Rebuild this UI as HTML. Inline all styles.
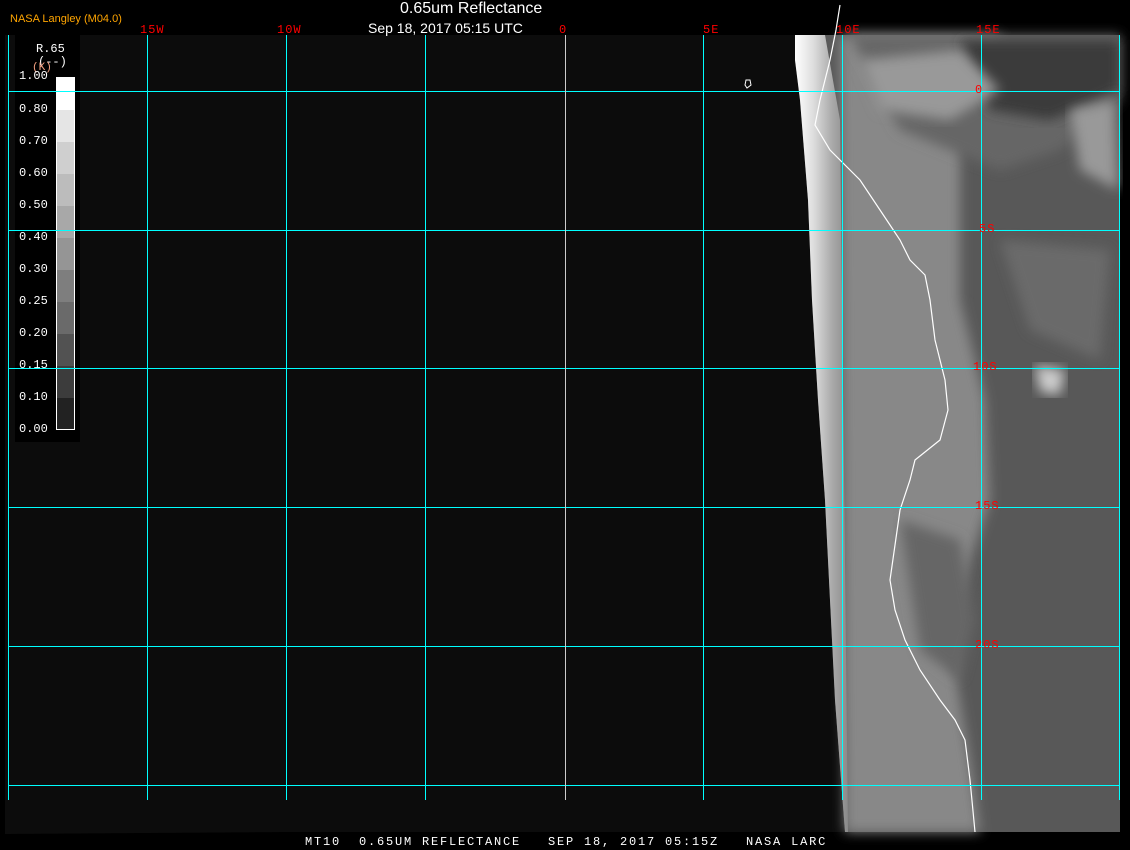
<!DOCTYPE html><html><head><style>
body{margin:0;background:#000;width:1130px;height:850px;overflow:hidden;position:relative;font-family:"Liberation Mono",monospace}
.t{position:absolute;color:#fff;font-family:"Liberation Sans",sans-serif;font-size:14px;white-space:nowrap}
.r{position:absolute;color:#f00;font-size:12px;font-family:"Liberation Mono",monospace;letter-spacing:1px}
.l{position:absolute;color:#fff;font-size:12px;left:19px;font-family:"Liberation Mono",monospace}
</style></head><body>
<svg width="1130" height="850" style="position:absolute;left:0;top:0">
<defs>
<linearGradient id="edge" x1="0" x2="1" y1="0" y2="0">
<stop offset="0" stop-color="#fff"/><stop offset="0.35" stop-color="#ddd"/><stop offset="0.7" stop-color="#aaa"/><stop offset="1" stop-color="#8a8a8a"/></linearGradient>
<filter id="bl"><feGaussianBlur stdDeviation="6"/></filter>
</defs>
<polygon points="5,35 1120,35 1120,832 290,832 5,834" fill="#0c0c0c"/>
<polygon points="795,35 1120,35 1120,832 845,832 835,700 830,600 825,500 818,400 812,300 808,200 800,100 795,60" fill="#585858"/>
<polygon points="840,35 1000,35 1000,80 960,150 960,300 985,400 990,500 970,560 950,640 970,760 980,832 845,832" fill="#888" filter="url(#bl)"/>
<polygon points="850,35 1120,35 1120,100 1060,150 1000,170 900,130" fill="#666" filter="url(#bl)"/>
<polygon points="960,40 1120,40 1120,90 1050,120 990,110" fill="#3a3a3a" filter="url(#bl)"/>
<polygon points="860,60 960,50 1000,90 950,120 880,110" fill="#999" filter="url(#bl)"/>
<polygon points="1070,110 1115,100 1118,190 1080,170" fill="#999" filter="url(#bl)"/>
<polygon points="1000,240 1110,250 1100,360 1030,330" fill="#6a6a6a" filter="url(#bl)"/>
<polygon points="1035,365 1065,370 1060,395 1040,392" fill="#ccc" filter="url(#bl)"/>
<polygon points="900,520 960,540 975,620 960,680 920,650" fill="#666" filter="url(#bl)"/>
<polygon points="795,35 825,35 840,120 848,832 845,832 835,700 830,600 825,500 818,400 812,300 808,200 800,100 795,60" fill="url(#edge)"/>
<polyline points="840,5 836,30 830,60 820,100 815,125 830,150 860,180 880,210 900,240 910,260 925,275 930,300 935,340 945,380 948,410 940,440 915,460 910,480 900,510 895,545 890,580 895,610 905,640 920,670 940,700 955,720 965,740 970,780 975,832" fill="none" stroke="#fff" stroke-width="1.2"/>
<path d="M746,80 l4,0 l1,5 l-4,3 l-2,-3z" fill="none" stroke="#fff"/>
<rect x="15" y="35" width="65" height="407" fill="#000"/>
<rect x="56" y="77" width="19" height="353" fill="#fff"/>
<g>
<rect x="57" y="110" width="17" height="32" fill="#e5e5e5"/>
<rect x="57" y="142" width="17" height="32" fill="#cfcfcf"/>
<rect x="57" y="174" width="17" height="32" fill="#bcbcbc"/>
<rect x="57" y="206" width="17" height="32" fill="#a8a8a8"/>
<rect x="57" y="238" width="17" height="32" fill="#959595"/>
<rect x="57" y="270" width="17" height="32" fill="#7e7e7e"/>
<rect x="57" y="302" width="17" height="32" fill="#6a6a6a"/>
<rect x="57" y="334" width="17" height="32" fill="#525252"/>
<rect x="57" y="366" width="17" height="32" fill="#3c3c3c"/>
<rect x="57" y="398" width="17" height="31" fill="#222"/>
</g>
<g stroke="#00ffff" stroke-width="1">
<line x1="8.5" y1="35" x2="8.5" y2="800"/><line x1="147.5" y1="35" x2="147.5" y2="800"/><line x1="286.5" y1="35" x2="286.5" y2="800"/><line x1="425.5" y1="35" x2="425.5" y2="800"/><line x1="703.5" y1="35" x2="703.5" y2="800"/><line x1="842.5" y1="35" x2="842.5" y2="800"/><line x1="981.5" y1="35" x2="981.5" y2="800"/><line x1="1119.5" y1="35" x2="1119.5" y2="800"/>
<line x1="8" y1="91.5" x2="1120" y2="91.5"/><line x1="8" y1="230.5" x2="1120" y2="230.5"/><line x1="8" y1="368.5" x2="1120" y2="368.5"/><line x1="8" y1="507.5" x2="1120" y2="507.5"/><line x1="8" y1="646.5" x2="1120" y2="646.5"/><line x1="8" y1="785.5" x2="1120" y2="785.5"/>
</g>
<line x1="565.5" y1="35" x2="565.5" y2="800" stroke="#ccc"/>
</svg>
<div class="t" style="left:10px;top:13px;font-size:11px;color:#ffa500">NASA Langley (M04.0)</div>
<div class="t" style="left:400px;top:0px;font-size:16px">0.65um Reflectance</div>
<div class="t" style="left:368px;top:20px">Sep 18, 2017 05:15 UTC</div>
<div class="r" style="left:140px;top:23px">15W</div>
<div class="r" style="left:277px;top:23px">10W</div>
<div class="r" style="left:559px;top:23px">0</div>
<div class="r" style="left:703px;top:23px">5E</div>
<div class="r" style="left:836px;top:23px">10E</div>
<div class="r" style="left:976px;top:23px">15E</div>
<div class="r" style="left:975px;top:83px">0</div>
<div class="r" style="left:979px;top:222px">5S</div>
<div class="r" style="left:973px;top:360px">10S</div>
<div class="r" style="left:975px;top:499px">15S</div>
<div class="r" style="left:975px;top:638px">20S</div>
<div class="l" style="left:36px;top:42px">R.65</div>
<div class="l" style="left:38px;top:55px">(--)</div>
<div class="l" style="left:32px;top:62px;color:#f4a080;font-size:11px">(K)</div>
<div class="l" style="top:69px">1.00</div>
<div class="l" style="top:102px">0.80</div>
<div class="l" style="top:134px">0.70</div>
<div class="l" style="top:166px">0.60</div>
<div class="l" style="top:198px">0.50</div>
<div class="l" style="top:230px">0.40</div>
<div class="l" style="top:262px">0.30</div>
<div class="l" style="top:294px">0.25</div>
<div class="l" style="top:326px">0.20</div>
<div class="l" style="top:358px">0.15</div>
<div class="l" style="top:390px">0.10</div>
<div class="l" style="top:422px">0.00</div>
<div class="t" style="left:305px;top:835px;font-family:'Liberation Mono',monospace;font-size:12px;letter-spacing:1.8px;white-space:pre">MT10  0.65UM REFLECTANCE   SEP 18, 2017 05:15Z   NASA LARC</div>
</body></html>
